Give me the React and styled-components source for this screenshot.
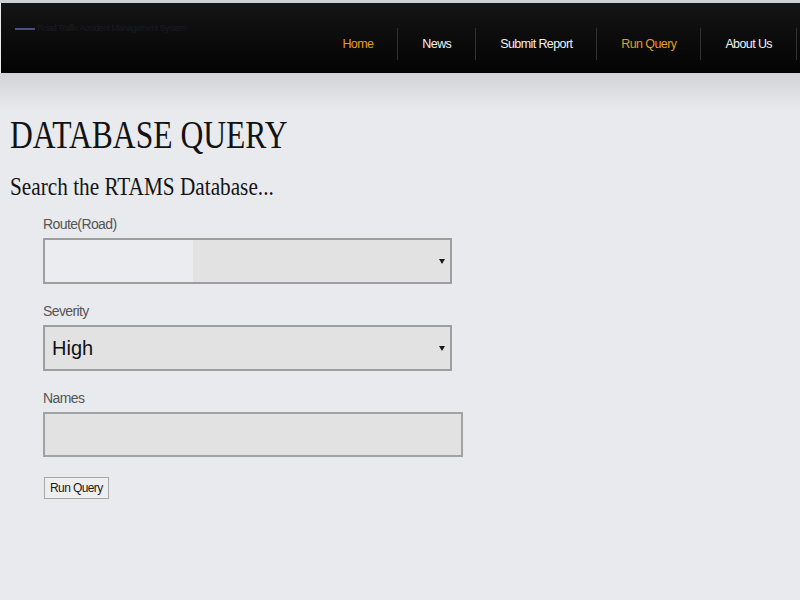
import React, { useState } from 'react';
import styled, { createGlobalStyle } from 'styled-components';

const GlobalStyle = createGlobalStyle`
  html, body {
    margin: 0;
    padding: 0;
    background: #e8eaee;
    font-family: "Liberation Sans", Arial, sans-serif;
  }
`;

const navLinks = [
  { label: 'Home', active: true },
  { label: 'News' },
  { label: 'Submit Report' },
  { label: 'Run Query', active: true },
  { label: 'About Us' },
];

const App = () => {
  const [route, setRoute] = useState('');
  const [severity, setSeverity] = useState('High');
  const [names, setNames] = useState('');

  return (
    <Page>
      <GlobalStyle />
      <TopStrip />
      <Header>
        <Logo>
          <LogoMark />
          <LogoText>Road Traffic Accident Management System</LogoText>
        </Logo>
        <Nav>
          {navLinks.map((link) => (
            <NavItem key={link.label} active={link.active}>
              {link.label}
            </NavItem>
          ))}
        </Nav>
      </Header>
      <Shade />

      <Main>
        <Title>DATABASE QUERY</Title>
        <Subtitle>Search the RTAMS Database...</Subtitle>

        <Form onSubmit={(e) => e.preventDefault()}>
          <Field>
            <Label>Route(Road)</Label>
            <SelectWrap>
              <Select faded value={route} onChange={(e) => setRoute(e.target.value)}>
                <option value=""></option>
                <option value="a1">A1</option>
                <option value="a2">A2</option>
              </Select>
            </SelectWrap>
          </Field>

          <Field>
            <Label>Severity</Label>
            <SelectWrap>
              <Select value={severity} onChange={(e) => setSeverity(e.target.value)}>
                <option value="High">High</option>
                <option value="Medium">Medium</option>
                <option value="Low">Low</option>
              </Select>
            </SelectWrap>
          </Field>

          <Field>
            <Label>Names</Label>
            <TextInput value={names} onChange={(e) => setNames(e.target.value)} />
          </Field>

          <SubmitButton type="submit">Run Query</SubmitButton>
        </Form>
      </Main>
    </Page>
  );
};

const Page = styled.div`
  min-height: 600px;
  background: #e8eaee;
`;

const TopStrip = styled.div`
  height: 3px;
  background: #cfd0d3;
`;

const Header = styled.header`
  display: flex;
  align-items: center;
  justify-content: space-between;
  height: 70px;
  margin-left: 1px;
  padding-top: 11px;
  box-sizing: border-box;
  background: linear-gradient(#151515, #0a0a0a 60%, #030303);
`;

const Logo = styled.div`
  align-self: flex-start;
  display: flex;
  align-items: flex-end;
  gap: 2px;
  margin: 9px 0 0 14px;
`;

const LogoMark = styled.div`
  width: 20px;
  height: 2px;
  margin-bottom: 3px;
  background: #4b4f86;
`;

const LogoText = styled.span`
  font-size: 9px;
  color: #1b1b24;
  letter-spacing: -0.6px;
`;

const Nav = styled.nav`
  display: flex;
  align-items: center;
  margin-right: 3px;
`;

const NavItem = styled.a`
  display: block;
  height: 32px;
  line-height: 32px;
  padding: 0 24px;
  border-right: 1px solid #323232;
  font-size: 12.5px;
  letter-spacing: -0.6px;
  color: ${(p) => (p.active ? '#e49d1f' : '#f2f2f2')};
  cursor: pointer;
`;

const Shade = styled.div`
  height: 38px;
  background: linear-gradient(#d3d3d6, #e8eaee);
`;

const Main = styled.main`
  padding: 4px 0 40px 10px;
`;

const Title = styled.h1`
  margin: 0;
  font-family: "Liberation Serif", "Times New Roman", serif;
  font-weight: normal;
  font-size: 40px;
  line-height: 40px;
  color: #121212;
  transform: scaleX(0.79);
  transform-origin: left top;
`;

const Subtitle = styled.h2`
  margin: 19px 0 0;
  font-family: "Liberation Serif", "Times New Roman", serif;
  font-weight: normal;
  font-size: 25px;
  line-height: 25px;
  color: #141414;
  transform: scaleX(0.85);
  transform-origin: left top;
`;

const Form = styled.form`
  display: flex;
  flex-direction: column;
  align-items: flex-start;
  gap: 19px;
  margin: 17px 0 0 33px;
`;

const Field = styled.div`
  display: flex;
  flex-direction: column;
  gap: 6px;
`;

const Label = styled.label`
  font-size: 14px;
  line-height: 16px;
  letter-spacing: -0.6px;
  color: #555;
`;

const SelectWrap = styled.div`
  position: relative;
  width: 409px;

  &::after {
    content: '';
    position: absolute;
    right: 7px;
    top: 21px;
    border-left: 3px solid transparent;
    border-right: 3px solid transparent;
    border-top: 5px solid #1a1a1a;
    pointer-events: none;
  }
`;

const Select = styled.select`
  appearance: none;
  -webkit-appearance: none;
  display: block;
  width: 100%;
  height: 46px;
  margin: 0;
  padding: 0 20px 0 7px;
  border: 2px solid #9e9e9e;
  border-radius: 0;
  box-sizing: border-box;
  background: ${(p) =>
    p.faded ? 'linear-gradient(to right, #eaecef 148px, #e2e2e2 148px)' : '#e2e2e2'};
  font-family: "Liberation Sans", Arial, sans-serif;
  font-size: 20px;
  color: #111;
  outline: none;
`;

const TextInput = styled.input`
  display: block;
  width: 420px;
  height: 45px;
  margin: 0;
  padding: 0 8px;
  border: 2px solid #a2a2a2;
  box-sizing: border-box;
  background: #e2e2e2;
  font-family: "Liberation Sans", Arial, sans-serif;
  font-size: 16px;
  outline: none;
`;

const SubmitButton = styled.button`
  margin: 1px 0 0 1px;
  height: 22px;
  padding: 0 5px;
  border: 1px solid #a8a8a8;
  border-radius: 0;
  background: #eeeeee;
  font-family: "Liberation Sans", Arial, sans-serif;
  font-size: 12px;
  letter-spacing: -0.6px;
  color: #1a1a1a;
  cursor: pointer;
`;

export default App;
